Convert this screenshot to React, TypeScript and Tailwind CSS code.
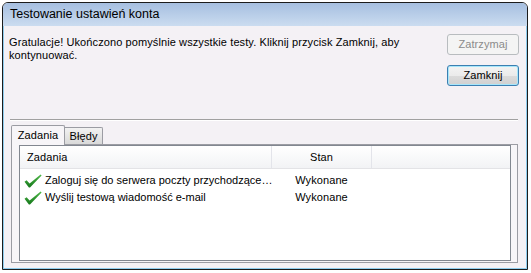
export default function App() {
  return (
    <div className="w-[531px] h-[273px] bg-white p-[2px] font-['Liberation_Sans',Arial,sans-serif] text-[11px] tracking-[0.1px] text-black">
      <div className="w-[526px] h-[268px] border border-[#1c1c1c] rounded-t-[6px] flex flex-col overflow-hidden">
        {/* Title bar */}
        <div className="h-[23px] shrink-0 bg-gradient-to-b from-[#a6bfe0] to-[#cbdcf0] pl-[7px] flex items-center text-[12.5px] tracking-normal text-black">
          Testowanie ustawień konta
        </div>

        {/* Body */}
        <div className="flex-1 bg-[#f4f1f5] border-x border-b border-[#8fcdee] flex flex-col">
          <div className="flex pt-[8px] pl-[5px] pr-[7px] h-[60px]">
            <p className="flex-1 mt-[2px] leading-[13px]">
              Gratulacje! Ukończono pomyślnie wszystkie testy. Kliknij przycisk Zamknij, aby
              <br />
              kontynuować.
            </p>
            <div className="flex flex-col gap-[10px]">
              <button
                disabled
                className="w-[72px] h-[21px] rounded-[3px] border border-[#b8bcbf] bg-[#f4f4f4] text-[#8b8b8b] leading-none"
              >
                Zatrzymaj
              </button>
              <button className="w-[72px] h-[21px] rounded-[3px] border border-[#3c7fb1] bg-[linear-gradient(#f3f3f3_0%,#ebebeb_50%,#dcdcdc_50%,#d0d0d0_100%)] shadow-[inset_0_0_0_1px_#a6e6fb] leading-none">
                Zamknij
              </button>
            </div>
          </div>

          {/* Separator */}
          <div className="mt-[33px] ml-[6px] mr-[8px] h-px bg-[#a0a0a0]" />
          <div className="ml-[6px] mr-[8px] h-px bg-white" />

          {/* Tabs */}
          <div className="mt-[4px] ml-[7px] flex items-end h-[19px]">
            <div className="relative z-10 mb-[-1px] w-[54px] h-[20px] border-x border-t border-[#9b9ca3] rounded-t-[2px] bg-[#f7f5f8] flex items-center justify-center">
              Zadania
            </div>
            <div className="w-[38px] h-[17px] border-t border-r border-[#9b9ca3] rounded-tr-[2px] bg-gradient-to-b from-[#f2f2f2] to-[#d9d9d9] flex items-center justify-center pt-px">
              Błędy
            </div>
          </div>

          {/* Tab panel */}
          <div className="ml-[7px] mr-[8px] h-[119px] border border-[#9b9ca3] bg-[#f7f5f8] flex flex-col">
            <div className="ml-[7px] mr-[6px] mb-px flex-1 border border-[#828790] bg-white flex flex-col">
              <div className="h-[23px] flex border-b border-[#e3e3e6] bg-gradient-to-b from-white to-[#f2f3f5]">
                <div className="w-[251px] pl-[7px] flex items-center">Zadania</div>
                <div className="w-px bg-[#e3e4ea]" />
                <div className="w-[99px] flex items-center justify-center">Stan</div>
                <div className="w-px bg-[#e3e4ea]" />
              </div>
              <div className="pt-[3px]">
                <Row text="Zaloguj się do serwera poczty przychodzące…" />
                <Row text="Wyślij testową wiadomość e-mail" />
              </div>
            </div>
          </div>
        </div>
      </div>
    </div>
  );
}

function Row({ text }: { text: string }) {
  return (
    <div className="h-[17px] flex items-center">
      <div className="w-[251px] flex items-center pl-[4px] gap-[3px] whitespace-nowrap tracking-normal">
        <svg width="18" height="14" viewBox="0 0 18 14" className="shrink-0">
          <defs>
            <linearGradient id="chk" x1="0" y1="0" x2="0" y2="1">
              <stop offset="0" stopColor="#4fb848" />
              <stop offset="1" stopColor="#14761a" />
            </linearGradient>
          </defs>
          <path d="M0.5 7.8 L2.6 6.2 L5.6 9.6 L16.6 0.6 L17.6 1.6 L6 13.6 L4.9 13.6 Z" fill="url(#chk)" />
        </svg>
        <span>{text}</span>
      </div>
      <div className="w-[101px] text-center">Wykonane</div>
    </div>
  );
}
